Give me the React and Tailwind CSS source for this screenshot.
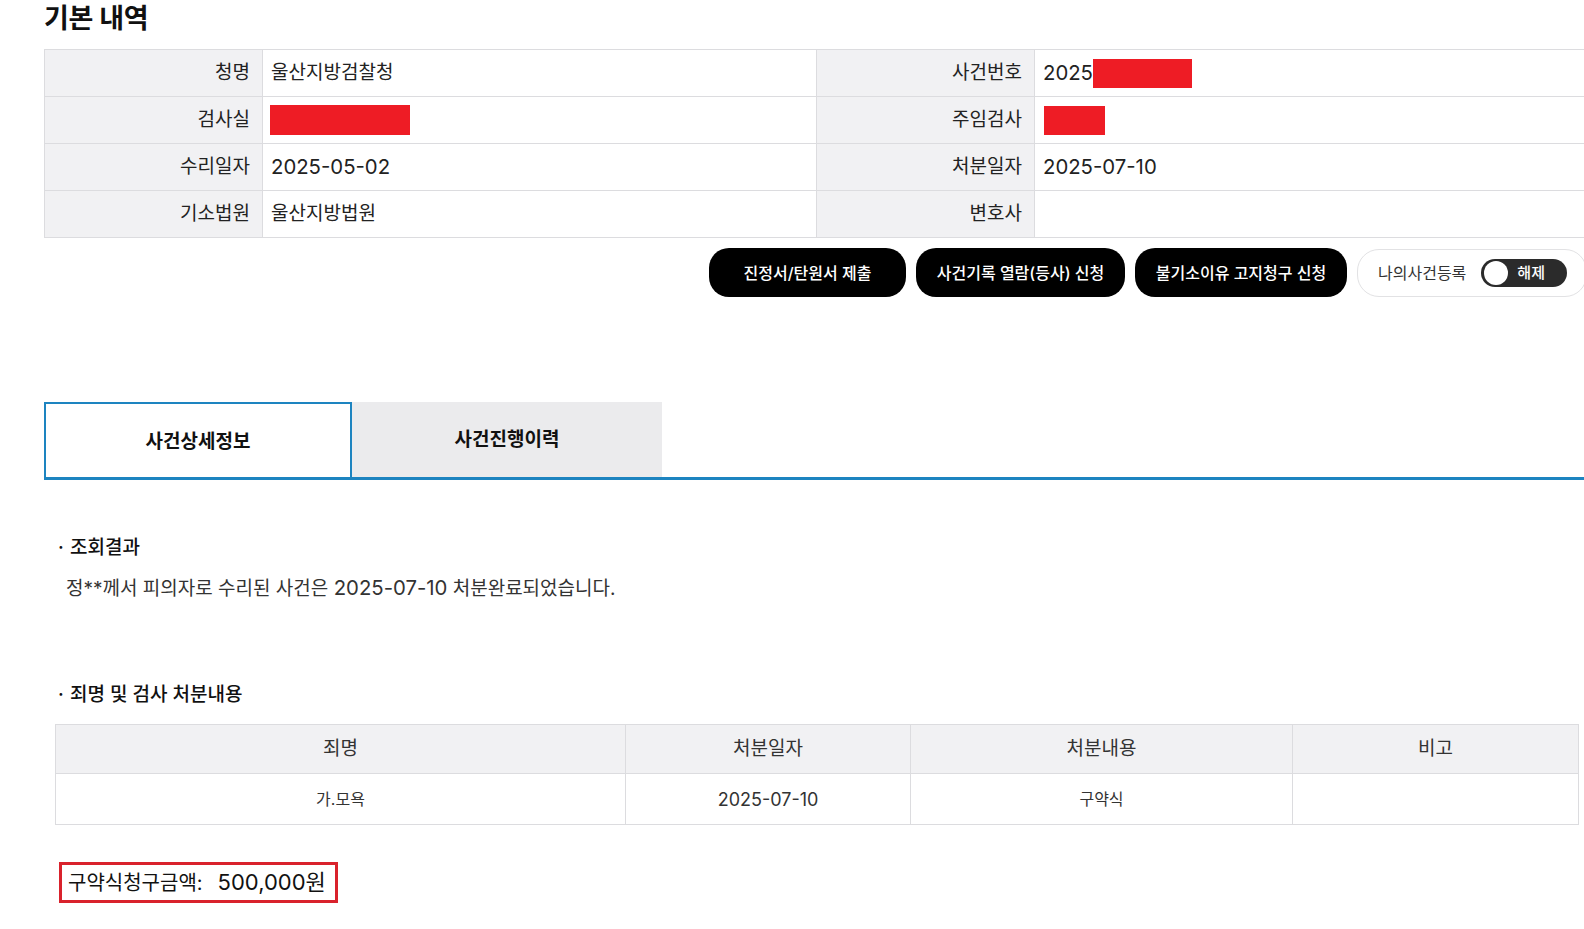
import React from "react";

const font = { fontFamily: "Inter, 'Noto Sans CJK KR', sans-serif" };

function N({ children, k = "a" }) {
  const cls = k === "b" ? "text-[1.1em]" : "text-[1.07em]";
  return <span className={cls}>{children}</span>;
}

function Label({ children }) {
  return (
    <div className="h-[46px] bg-[#f1f1f3] flex items-center justify-end pr-[12px] text-[19px] text-[#222] border-r border-[#dcdcdf]">
      {children}
    </div>
  );
}

function Value({ children, last }) {
  return (
    <div className={"h-[46px] bg-white flex items-center pl-[8px] text-[19px] text-[#222] " + (last ? "" : "border-r border-[#dcdcdf]")}>
      {children}
    </div>
  );
}

function Row({ children }) {
  return (
    <div className="grid grid-cols-[218px_554px_218px_552px] border-b border-[#dcdcdf]">{children}</div>
  );
}

export default function App() {
  return (
    <div className="w-[1584px] h-[929px] overflow-hidden bg-white text-[#222]" style={font}>
      <div className="ml-[44px] w-[1544px]">
        <h1 className="h-[36px] leading-[38px] text-[27px] font-bold text-[#111] tracking-[-0.3px]">기본 내역</h1>

        <div className="mt-[13px] border-t border-l border-[#dcdcdf]">
          <Row>
            <Label>청명</Label>
            <Value>울산지방검찰청</Value>
            <Label>사건번호</Label>
            <Value last>
              <N>2025</N>
              <span className="inline-block w-[99px] h-[29px] bg-[#ee1c25]" />
            </Value>
          </Row>
          <Row>
            <Label>검사실</Label>
            <Value>
              <span className="inline-block w-[140px] h-[30px] bg-[#ee1c25] -ml-[1px]" />
            </Value>
            <Label>주임검사</Label>
            <Value last>
              <span className="inline-block w-[61px] h-[29px] bg-[#ee1c25] ml-[1px]" />
            </Value>
          </Row>
          <Row>
            <Label>수리일자</Label>
            <Value><N>2025-05-02</N></Value>
            <Label>처분일자</Label>
            <Value last><N>2025-07-10</N></Value>
          </Row>
          <Row>
            <Label>기소법원</Label>
            <Value>울산지방법원</Value>
            <Label>변호사</Label>
            <Value last></Value>
          </Row>
        </div>

        <div className="mt-[10px] flex justify-end items-center gap-[10px] pr-[1px]">
          <button className="h-[49px] w-[197px] rounded-[20px] bg-black text-white text-[16px] font-medium">진정서/탄원서 제출</button>
          <button className="h-[49px] w-[209px] rounded-[20px] bg-black text-white text-[16px] font-medium">사건기록 열람(등사) 신청</button>
          <button className="h-[49px] w-[212px] rounded-[20px] bg-black text-white text-[16px] font-medium">불기소이유 고지청구 신청</button>
          <div className="h-[48px] w-[230px] rounded-[22px] border border-[#e2e2e4] bg-white flex items-center pl-[20px] gap-[15px]">
            <span className="text-[16px] text-[#333]">나의사건등록</span>
            <span className="relative w-[86px] h-[28px] rounded-full bg-[#2b2b2b] flex items-center">
              <span className="absolute left-[3px] top-[2px] w-[24px] h-[24px] rounded-full bg-white" />
              <span className="ml-[36px] mt-[2px] text-[15px] text-white font-medium">해제</span>
            </span>
          </div>
        </div>

        <div className="mt-[105px] flex border-b-[3px] border-[#1d84c0]">
          <div className="w-[308px] h-[75px] border-2 border-b-0 border-[#1d84c0] bg-white flex items-center justify-center text-[19px] font-bold text-[#111] pt-[3px]">
            사건상세정보
          </div>
          <div className="w-[310px] h-[75px] bg-[#ebebed] flex items-center justify-center text-[19px] font-bold text-[#111] pt-[1px]">
            사건진행이력
          </div>
        </div>

        <div className="ml-[10px] mt-[55px]">
          <div className="flex items-center text-[19px] font-medium text-[#111] h-[26px]">
            <span className="w-[14px] text-center">·</span>
            <span className="ml-[2px]">조회결과</span>
          </div>
          <p className="mt-[14px] ml-[12px] text-[19px] text-[#333] h-[26px] leading-[26px]">
            정**께서 피의자로 수리된 사건은 <N>2025-07-10</N> 처분완료되었습니다.
          </p>

          <div className="mt-[81px] flex items-center text-[19px] font-medium text-[#111] h-[26px]">
            <span className="w-[14px] text-center">·</span>
            <span className="ml-[2px]">죄명 및 검사 처분내용</span>
          </div>

          <div className="mt-[16px] ml-[1px] w-[1524px] border border-[#dcdcdf]">
            <div className="grid grid-cols-[570px_285px_382px_285px] bg-[#f1f1f3] border-b border-[#dcdcdf] text-[19px] text-[#333]">
              <div className="h-[48px] flex items-center justify-center border-r border-[#dcdcdf]">죄명</div>
              <div className="h-[48px] flex items-center justify-center border-r border-[#dcdcdf]">처분일자</div>
              <div className="h-[48px] flex items-center justify-center border-r border-[#dcdcdf]">처분내용</div>
              <div className="h-[48px] flex items-center justify-center">비고</div>
            </div>
            <div className="grid grid-cols-[570px_285px_382px_285px] bg-white text-[16px] text-[#333]">
              <div className="h-[50px] flex items-center justify-center border-r border-[#dcdcdf]">가.모욕</div>
              <div className="h-[50px] flex items-center justify-center border-r border-[#dcdcdf] text-[18px]">2025-07-10</div>
              <div className="h-[50px] flex items-center justify-center border-r border-[#dcdcdf]">구약식</div>
              <div className="h-[50px] flex items-center justify-center"></div>
            </div>
          </div>

          <div className="mt-[37px] ml-[5px] inline-flex items-center h-[41px] pl-[6px] pr-[9px] border-[3px] border-[#d9222c] text-[20px] text-[#111]">
            <span>구약식청구금액:</span>
            <span className="ml-[15px]"><N k="b">500,000원</N></span>
          </div>
        </div>
      </div>
    </div>
  );
}
